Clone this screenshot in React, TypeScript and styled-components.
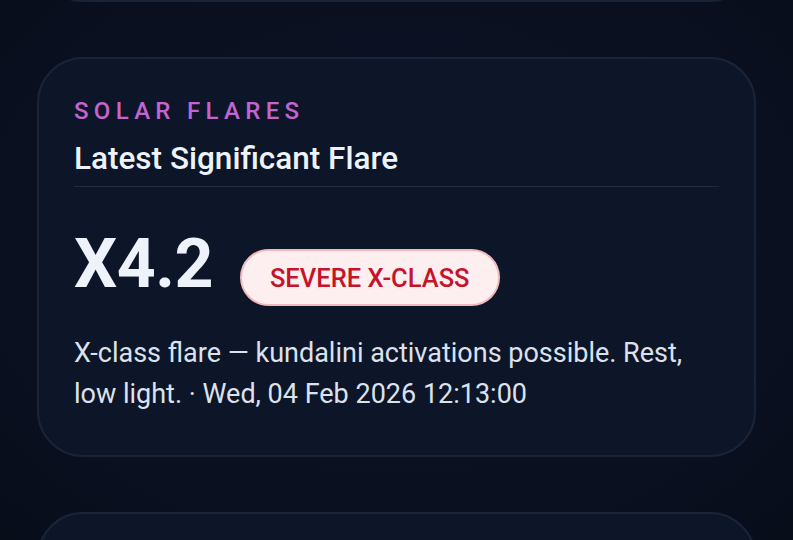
import React from "react";
import styled, { createGlobalStyle } from "styled-components";

const Global = createGlobalStyle`
  html, body {
    margin: 0;
    padding: 0;
    background: #0a101f;
    height: 100%;
    overflow: hidden;
  }
  body {
    font-family: Roboto, "Noto Sans", "Liberation Sans", sans-serif;
    -webkit-font-smoothing: antialiased;
  }
`;

const Screen = styled.div`
  width: 793px;
  height: 540px;
  overflow: hidden;
  background: radial-gradient(ellipse at 50% 45%, #0b1223 0%, #0a1020 70%, #080d1a 100%);
`;

const Feed = styled.div`
  display: flex;
  flex-direction: column;
  gap: 55px;
  padding: 0 37px;
  margin-top: -198px;
`;

const Card = styled.section<{ $h?: number }>`
  box-sizing: border-box;
  background: #0d1528;
  border: 2px solid #1a2438;
  border-radius: 46px;
  padding: 37px 35px 40px;
  ${(p) => (p.$h ? `height: ${p.$h}px;` : "")}
`;

const Eyebrow = styled.div`
  font-size: 24px;
  font-weight: 500;
  letter-spacing: 5.3px;
  color: #c464cf;
  text-transform: uppercase;
  line-height: 30px;
`;

const Title = styled.h2`
  margin: 13px 0 0;
  font-size: 31.5px;
  font-weight: 500;
  color: #eef2fa;
  line-height: 40px;
  padding-bottom: 7px;
  border-bottom: 1px solid #1f2a40;
`;

const ReadingRow = styled.div`
  display: flex;
  align-items: center;
  gap: 27px;
  margin-top: 34px;
`;

const Magnitude = styled.div`
  font-size: 68px;
  font-weight: 700;
  color: #eef2fb;
  line-height: 78px;
  letter-spacing: -0.5px;
`;

const Badge = styled.span`
  display: inline-flex;
  align-items: center;
  box-sizing: border-box;
  height: 57px;
  padding: 0 28px;
  margin-top: 28px;
  border-radius: 29px;
  background: #fdefef;
  border: 2px solid #f2b9bd;
  color: #c4132b;
  font-size: 25.5px;
  font-weight: 500;
`;

const Description = styled.p`
  margin: 27px 0 0;
  font-size: 27px;
  line-height: 41px;
  color: #dce2ec;
  font-weight: 400;
`;

export default function App() {
  return (
    <Screen>
      <Global />
      <Feed>
        <Card $h={200} />
        <Card>
          <Eyebrow>Solar Flares</Eyebrow>
          <Title>Latest Significant Flare</Title>
          <ReadingRow>
            <Magnitude>X4.2</Magnitude>
            <Badge>SEVERE X-CLASS</Badge>
          </ReadingRow>
          <Description>
            X-class flare — kundalini activations possible. Rest, low light. · Wed, 04 Feb 2026 12:13:00
          </Description>
        </Card>
        <Card $h={200} />
      </Feed>
    </Screen>
  );
}
